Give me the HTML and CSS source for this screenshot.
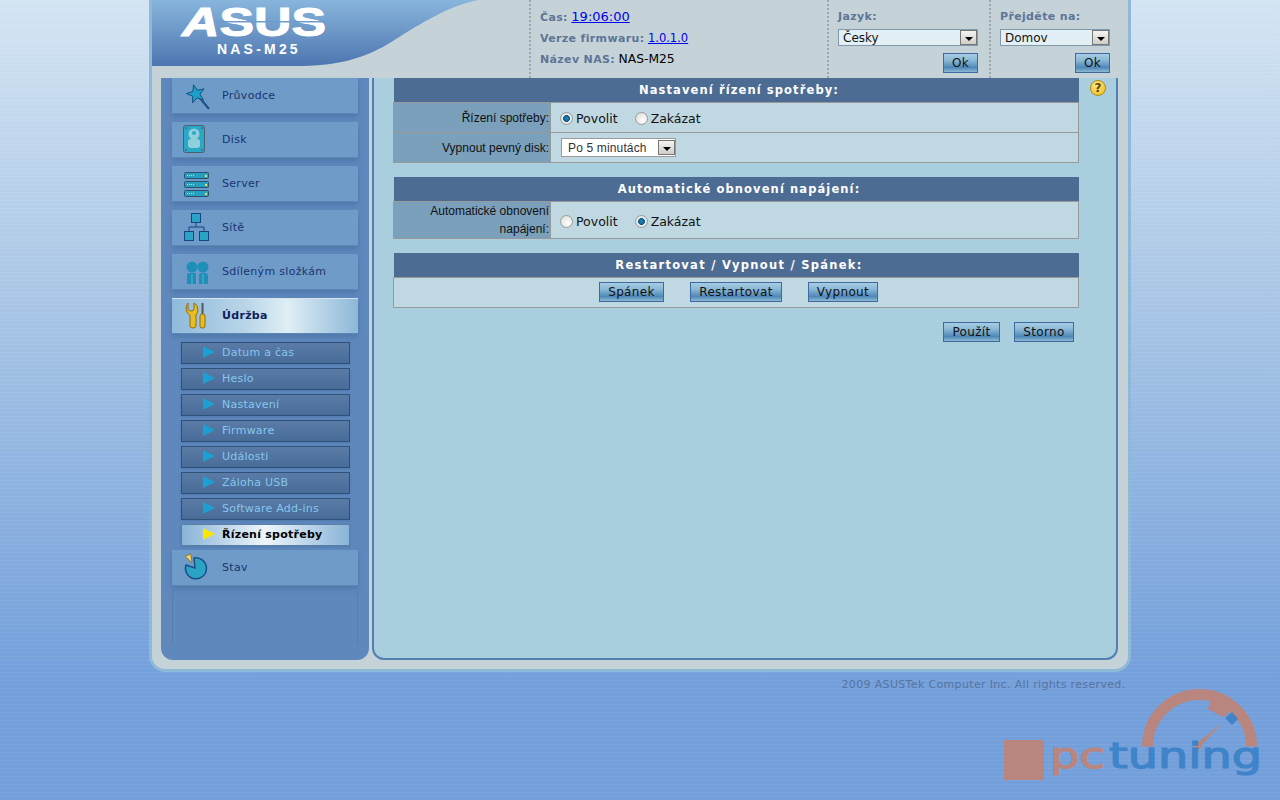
FILE: index.html
```html
<!DOCTYPE html>
<html lang="cs">
<head>
    <meta charset="UTF-8">
    <meta name="viewport" content="width=device-width, initial-scale=1.0">
    <title>NAS-M25</title>
    <link rel="stylesheet" href="styles.css">
</head>
<body>
    <div class="frame">
        <div class="header">
            <div class="logo">
                <svg width="377" height="78" viewBox="0 0 377 78">
                    <defs>
                        <linearGradient id="logoBg" x1="0" y1="0" x2="0" y2="1">
                            <stop offset="0" stop-color="#88b5dc"/>
                            <stop offset="1" stop-color="#4d76b0"/>
                        </linearGradient>
                    </defs>
                    <path d="M0 0H326C292 7 262 28 236 44C206 62 176 66 146 66H0Z" fill="url(#logoBg)"/>
                    <text class="logo-asus" x="30" y="36" textLength="144" lengthAdjust="spacingAndGlyphs"><tspan class="logo-a">A</tspan>SUS</text>
                    <rect x="62" y="21" width="112" height="1.5" fill="#6f9ccc"/>
                    <text class="logo-model" x="65" y="54">NAS-M25</text>
                </svg>
            </div>
            <div class="info">
                <p><b>Čas:</b> <a class="time" href="#">19:06:00</a></p>
                <p><b>Verze firmwaru:</b> <a class="version" href="#">1.0.1.0</a></p>
                <p><b>Název NAS:</b> <span>NAS-M25</span></p>
            </div>
            <div class="picker lang">
                <b>Jazyk:</b>
                <div class="select top-select"><span>Česky</span><i class="drop"></i></div>
                <button class="btn ok">Ok</button>
            </div>
            <div class="picker goto">
                <b>Přejděte na:</b>
                <div class="select top-select"><span>Domov</span><i class="drop"></i></div>
                <button class="btn ok">Ok</button>
            </div>
        </div>

        <div class="body">
            <div class="sidebar">
                <div class="menu-item">
                    <svg width="32" height="32" viewBox="0 0 32 32">
                        <line x1="19" y1="17" x2="29" y2="29" stroke="#1c4f86" stroke-width="2"/>
                        <polygon points="13.5,4.8 17.4,10.3 24,8.8 20,14.2 23.4,20 17,17.9 12.6,22.9 12.6,16.2 6.5,13.5 12.9,11.5" fill="#1d9fc9" stroke="#14507f"/>
                    </svg>
                    <span>Průvodce</span>
                </div>
                <div class="menu-item">
                    <svg width="32" height="32" viewBox="0 0 32 32">
                        <rect x="3.5" y="1.5" width="21" height="27" rx="2" fill="#2aa9c6" stroke="#4a5f70"/>
                        <circle cx="14" cy="10" r="5.5" fill="#8fd0dc"/>
                        <circle cx="14" cy="9" r="2" fill="#2aa9c6"/>
                        <rect x="8" y="15" width="12" height="9" rx="3" fill="#8fd0dc"/>
                        <circle cx="6" cy="4" r="1" fill="#54616b"/>
                        <circle cx="22" cy="4" r="1" fill="#54616b"/>
                        <circle cx="6" cy="26" r="1" fill="#54616b"/>
                        <circle cx="22" cy="26" r="1" fill="#54616b"/>
                    </svg>
                    <span>Disk</span>
                </div>
                <div class="menu-item">
                    <svg width="32" height="32" viewBox="0 0 32 32">
                        <g fill="#27a0c0" stroke="#2d4f6b">
                            <rect x="4.5" y="4.5" width="24" height="6" rx="1"/>
                            <rect x="4.5" y="13.5" width="24" height="6" rx="1"/>
                            <rect x="4.5" y="22.5" width="24" height="6" rx="1"/>
                        </g>
                        <g stroke="#b6e2ea" stroke-dasharray="1 1">
                            <line x1="7" y1="7.5" x2="15" y2="7.5"/>
                            <line x1="7" y1="16.5" x2="15" y2="16.5"/>
                            <line x1="7" y1="25.5" x2="15" y2="25.5"/>
                        </g>
                        <g fill="#e8d860">
                            <rect x="25" y="7" width="2" height="2"/>
                            <rect x="25" y="16" width="2" height="2"/>
                            <rect x="25" y="25" width="2" height="2"/>
                        </g>
                    </svg>
                    <span>Server</span>
                </div>
                <div class="menu-item">
                    <svg width="32" height="32" viewBox="0 0 32 32">
                        <path d="M16 11V15M9 19V15H24V19" fill="none" stroke="#14457f"/>
                        <g fill="#2ba3c6" stroke="#14457f">
                            <rect x="11.5" y="1.5" width="9" height="9"/>
                            <rect x="4.5" y="19.5" width="9" height="9"/>
                            <rect x="19.5" y="19.5" width="9" height="9"/>
                        </g>
                    </svg>
                    <span>Sítě</span>
                </div>
                <div class="menu-item">
                    <svg width="32" height="32" viewBox="0 0 32 32">
                        <g fill="#1f8fb8">
                            <circle cx="12" cy="11" r="5.5"/>
                            <circle cx="23" cy="11" r="5.5"/>
                            <path d="M7 28V20Q7 17 10 17H15Q16 17 16 20V28Z"/>
                            <path d="M19 28V20Q19 17 21 17H25Q28 17 28 20V28Z"/>
                        </g>
                        <path d="M12 18V28M23 18V28" stroke="#4fb8d4"/>
                    </svg>
                    <span>Sdíleným složkám</span>
                </div>
                <div class="menu-item active">
                    <svg width="32" height="32" viewBox="0 0 32 32">
                        <path d="M8 3V9Q8 11 11 11Q14 11 14 9V3Q18 5 18 10Q18 13 16 15V26Q16 28 13 28Q10 28 10 26V15Q6 13 6 9Q6 5 8 3Z" fill="#e8bc22" stroke="#8f6f10"/>
                        <rect x="21.5" y="3" width="2" height="11" fill="#55585c"/>
                        <rect x="20" y="14" width="5" height="14" rx="2" fill="#e8bc22" stroke="#8f6f10"/>
                    </svg>
                    <span>Údržba</span>
                </div>
                <div class="submenu">
                    <div class="sub-item"><svg class="arrow" width="12" height="12" viewBox="0 0 12 12"><polygon points="0,0 12,6 0,12"/></svg><span>Datum a čas</span></div>
                    <div class="sub-item"><svg class="arrow" width="12" height="12" viewBox="0 0 12 12"><polygon points="0,0 12,6 0,12"/></svg><span>Heslo</span></div>
                    <div class="sub-item"><svg class="arrow" width="12" height="12" viewBox="0 0 12 12"><polygon points="0,0 12,6 0,12"/></svg><span>Nastavení</span></div>
                    <div class="sub-item"><svg class="arrow" width="12" height="12" viewBox="0 0 12 12"><polygon points="0,0 12,6 0,12"/></svg><span>Firmware</span></div>
                    <div class="sub-item"><svg class="arrow" width="12" height="12" viewBox="0 0 12 12"><polygon points="0,0 12,6 0,12"/></svg><span>Události</span></div>
                    <div class="sub-item"><svg class="arrow" width="12" height="12" viewBox="0 0 12 12"><polygon points="0,0 12,6 0,12"/></svg><span>Záloha USB</span></div>
                    <div class="sub-item"><svg class="arrow" width="12" height="12" viewBox="0 0 12 12"><polygon points="0,0 12,6 0,12"/></svg><span>Software Add-ins</span></div>
                    <div class="sub-item current"><svg class="arrow" width="12" height="12" viewBox="0 0 12 12"><polygon points="0,0 12,6 0,12"/></svg><span>Řízení spotřeby</span></div>
                </div>
                <div class="menu-item">
                    <svg width="32" height="32" viewBox="0 0 32 32">
                        <path d="M14 6A10.5 10.5 0 1 1 6 13L15 16Z" fill="#2aa3c4" stroke="#1b4f8a" stroke-width="1.5"/>
                        <polygon points="5,4 11,2 12,11" fill="#e8cf70" stroke="#8c7a3a"/>
                    </svg>
                    <span>Stav</span>
                </div>
                <div class="side-fill"></div>
            </div>

            <div class="content">
                <div class="forms">
                    <table class="section">
                        <colgroup><col class="col-name"><col></colgroup>
                        <tr><th colspan="2">Nastavení řízení spotřeby:</th></tr>
                        <tr class="row-a">
                            <td class="name">Řízení spotřeby:</td>
                            <td class="value">
                                <label class="radio"><input type="radio" name="power" checked>Povolit</label>
                                <label class="radio"><input type="radio" name="power">Zakázat</label>
                            </td>
                        </tr>
                        <tr class="row-a">
                            <td class="name">Vypnout pevný disk:</td>
                            <td class="value">
                                <div class="select disk-select"><span>Po 5 minutách</span><i class="drop"></i></div>
                            </td>
                        </tr>
                    </table>
                    <table class="section">
                        <colgroup><col class="col-name"><col></colgroup>
                        <tr><th colspan="2">Automatické obnovení napájení:</th></tr>
                        <tr class="row-b">
                            <td class="name">Automatické obnovení napájení:</td>
                            <td class="value">
                                <label class="radio"><input type="radio" name="restore">Povolit</label>
                                <label class="radio"><input type="radio" name="restore" checked>Zakázat</label>
                            </td>
                        </tr>
                    </table>
                    <table class="section wide">
                        <tr><th>Restartovat / Vypnout / Spánek:</th></tr>
                        <tr class="row-a">
                            <td class="value actions">
                                <button class="btn b-sleep">Spánek</button>
                                <button class="btn b-restart">Restartovat</button>
                                <button class="btn b-off">Vypnout</button>
                            </td>
                        </tr>
                    </table>
                    <div class="apply">
                        <button class="btn b-apply">Použít</button>
                        <button class="btn b-cancel">Storno</button>
                    </div>
                </div>
                <div class="help">?</div>
            </div>
        </div>
    </div>
    <div class="copyright">2009 ASUSTek Computer Inc. All rights reserved.</div>

    <svg class="watermark" width="260" height="115" viewBox="0 0 260 115">
        <path d="M147.5 61.5A52 52 0 0 1 251.5 61.5" fill="none" stroke="#b8867f" stroke-width="11"/>
        <polygon points="210,17 208,24 223,32 235,24 222,10" fill="#b8867f"/>
        <polygon points="232,27 238,34 232,40 225,33" fill="#3f83c8"/>
        <polygon points="223,37 200,62 196,59" fill="#b8867f"/>
        <circle cx="198" cy="61" r="3.5" fill="#b8867f"/>
        <rect x="4" y="55" width="40" height="40" fill="#b8867f"/>
        <text class="mark-pc" x="50" y="83" textLength="55" lengthAdjust="spacingAndGlyphs">pc</text>
        <text class="mark-tuning" x="109" y="83" textLength="153" lengthAdjust="spacingAndGlyphs">tuning</text>
    </svg>
</body>
</html>
```

FILE: styles.css
```css
html, body {
    height: 100%;
}
body {
    margin: 0;
    overflow: hidden;
    font-family: "DejaVu Sans", sans-serif;
    background-color: #739fdb;
    background-image:
        repeating-linear-gradient(to bottom, rgba(255, 255, 255, 0.06) 0, rgba(255, 255, 255, 0.06) 1px, transparent 1px, transparent 4px),
        linear-gradient(to bottom, #d4e4f3 0, #a9c6e6 300px, #739fdb 680px);
}
.frame {
    width: 976px;
    height: 669px;
    margin: 0 auto;
    background-color: #c5d3d8;
    border: 3px solid #8fb9d8;
    border-top: 0;
    border-radius: 0 0 16px 16px;
}

/* header */
.header {
    display: flex;
    height: 78px;
    color: #5d7596;
    font-size: 11px;
}
.header b {
    letter-spacing: 0.35px;
}
.logo {
    width: 377px;
    flex: none;
}
.logo svg {
    display: block;
}
.logo-asus {
    font-family: "Liberation Sans", sans-serif;
    font-size: 40px;
    font-weight: bold;
    fill: #fff;
    stroke: #fff;
    stroke-width: 1px;
}
.logo-a {
    font-style: italic;
}
.logo-model {
    font-family: "Liberation Sans", sans-serif;
    font-size: 14px;
    font-weight: bold;
    letter-spacing: 3.2px;
    fill: #fff;
}
.info, .picker {
    box-sizing: border-box;
    border-left: 2px dotted #9aa8ae;
}
.info {
    width: 298px;
    padding: 7px 0 0 9px;
}
.info p {
    margin: 0;
    height: 21.5px;
    line-height: 19px;
}
.info span {
    color: #000;
    font-size: 12.3px;
}
.time {
    font-size: 13px;
    color: #00e;
}
.version {
    font-size: 11.5px;
    color: #00e;
}
.picker {
    display: flex;
    flex-direction: column;
    padding: 9px 0 0 9px;
}
.lang {
    width: 162px;
}
.goto {
    width: 139px;
}
.picker b {
    line-height: 16px;
}
.top-select {
    margin-top: 4px;
    height: 17px;
    background-color: #e2f0f6;
    border-color: #8199ad;
    font-size: 12px;
}
.lang .top-select {
    width: 140px;
}
.goto .top-select {
    width: 110px;
}
.ok {
    width: 35px;
    margin: 7px 0 0 105px;
    height: 20px;
}
.goto .ok {
    margin-left: 75px;
}

/* select look */
.select {
    box-sizing: border-box;
    display: flex;
    align-items: center;
    justify-content: space-between;
    border-width: 1px;
    border-style: solid;
    color: #111;
}
.select span {
    padding-left: 4px;
}
.drop {
    box-sizing: border-box;
    width: 17px;
    height: 15px;
    flex: none;
    display: flex;
    align-items: center;
    justify-content: center;
    background: linear-gradient(to bottom, #f4f4f0, #cfcfc8);
    border: 1px solid #777;
}
.drop::after {
    content: "";
    margin-top: 3px;
    border-left: 4px solid transparent;
    border-right: 4px solid transparent;
    border-top: 4px solid #000;
}

/* buttons */
.btn {
    box-sizing: border-box;
    height: 20px;
    padding: 0;
    font-family: "DejaVu Sans", sans-serif;
    font-size: 12px;
    letter-spacing: 0.35px;
    color: #111;
    border: 1px solid #3f6a9f;
    background: linear-gradient(to bottom, #a6cde3 0, #8ab8d6 35%, #4f88b8 75%, #8db9d3 100%);
    cursor: pointer;
}

/* body */
.body {
    display: flex;
    height: 582px;
    padding-left: 9px;
}
.sidebar {
    box-sizing: border-box;
    width: 208px;
    margin-right: 3px;
    padding: 0 11px;
    display: flex;
    flex-direction: column;
    background-color: #5f88bd;
    border-radius: 0 0 12px 12px;
}
.menu-item {
    display: flex;
    align-items: center;
    flex: none;
    height: 35px;
    margin-bottom: 9px;
    padding-left: 8px;
    font-size: 11px;
    letter-spacing: 0.3px;
    color: #1a3570;
    background-color: #6f9bc9;
    box-shadow: 0 1px 0 #5c86b5, 0 4px 5px #4f79ab;
}
.menu-item span {
    margin-left: 10px;
}
.menu-item.active {
    font-weight: bold;
    color: #10205c;
    background: linear-gradient(to right, #8fbadb 0, #b9d6e8 40%, #e0eef5 62%, #8db8d8 100%);
    box-shadow: 0 1px 0 #d6e6f0 inset, 0 1px 0 #5c86b5, 0 4px 5px #4f79ab;
}
.submenu {
    display: flex;
    flex-direction: column;
    gap: 4px;
    margin-bottom: 4px;
    padding: 0 8px 0 9px;
}
.sub-item {
    box-sizing: border-box;
    display: flex;
    align-items: center;
    height: 22px;
    padding: 0 0 2px 21px;
    font-size: 11px;
    letter-spacing: 0.25px;
    color: #86c6ee;
    background: linear-gradient(to bottom, #5a7ba6, #486c98);
    border: 1px solid #2f5078;
    box-shadow: 0 1px 2px #4f79ab;
}
.sub-item span {
    margin-left: 7px;
}
.arrow {
    fill: #1c9fd2;
}
.sub-item.current {
    font-weight: bold;
    color: #000;
    background: linear-gradient(to right, #8ab4d8 0, #eef6fa 50%, #8ab4d8 100%);
    border-color: #5a7fa5;
}
.current .arrow {
    fill: #f8e800;
}
.side-fill {
    flex: none;
    height: 55px;
    margin-top: -4px;
    border-left: 1px solid #5780b2;
    border-right: 1px solid #5780b2;
}

/* content */
.content {
    box-sizing: border-box;
    width: 746px;
    padding-left: 19px;
    display: flex;
    background-color: #a9cfdf;
    border: 2px solid #5180b2;
    border-top: 0;
    border-radius: 0 0 12px 12px;
}
.forms {
    width: 686px;
}
.section {
    width: 686px;
    margin-bottom: 14px;
    border-collapse: collapse;
    table-layout: fixed;
}
.col-name {
    width: 157px;
}
.section th {
    height: 24px;
    padding: 0 0 0 6px;
    font-size: 11.5px;
    letter-spacing: 1.1px;
    color: #fff;
    background-color: #4d6c94;
    border: 0;
}
.section.wide th {
    letter-spacing: 1.27px;
}
.section td {
    padding: 0;
    border: 1px solid #999;
}
.row-a td {
    height: 29px;
}
.row-b td {
    height: 35px;
}
.section .name {
    padding-right: 1px;
    text-align: right;
    font-family: "Liberation Sans", sans-serif;
    font-size: 12px;
    line-height: 18px;
    color: #111;
    background-color: #7aa0bc;
}
.section .value {
    padding-left: 10px;
    background-color: #c0d8e2;
    font-size: 12.5px;
    color: #111;
}
.radio {
    display: inline-flex;
    align-items: center;
    margin-right: 14px;
    padding-top: 4px;
}
.radio input {
    appearance: none;
    box-sizing: border-box;
    width: 13px;
    height: 13px;
    margin: 0 3px 0 -1px;
    border: 1px solid #9a9a9a;
    border-radius: 50%;
    background: radial-gradient(circle at 65% 65%, #fff, #d8d8d0);
}
.radio input:checked {
    background: radial-gradient(circle, #2a86bc 0, #0d5a8a 40%, #e8eef0 48%, #d8d8d0 100%);
}
.disk-select {
    width: 115px;
    height: 19px;
    border-color: #9a9a9a;
    background-color: #fff;
    font-family: "Liberation Sans", sans-serif;
    font-size: 12px;
    letter-spacing: 0.15px;
    color: #333;
}
.disk-select span {
    padding-left: 6px;
}
.section .actions {
    padding-left: 0;
    text-align: left;
}
.actions .btn {
    vertical-align: middle;
    margin-bottom: 2px;
}
.b-sleep {
    width: 65px;
    margin-left: 205px;
}
.b-restart {
    width: 92px;
    margin-left: 22px;
}
.b-off {
    width: 70px;
    margin-left: 22px;
}
.apply {
    display: flex;
    justify-content: flex-end;
    gap: 14px;
    padding-right: 5px;
}
.b-apply {
    width: 57px;
}
.b-cancel {
    width: 60px;
}
.help {
    box-sizing: border-box;
    width: 16px;
    height: 16px;
    margin: 2px 0 0 11px;
    font-size: 12px;
    font-weight: bold;
    line-height: 14px;
    text-align: center;
    color: #5a4400;
    background: radial-gradient(circle at 40% 30%, #ffe98a, #eeb810);
    border: 1px solid #b08a10;
    border-radius: 50%;
}

/* footer */
.copyright {
    width: 971px;
    margin: 6px auto 0;
    text-align: right;
    font-size: 11px;
    letter-spacing: 0.34px;
    color: #56749f;
}
.watermark {
    position: absolute;
    right: 20px;
    bottom: 0;
}
.mark-pc, .mark-tuning {
    font-family: "DejaVu Sans", sans-serif;
    font-size: 35px;
    stroke-width: 1.2px;
}
.mark-pc {
    fill: #b8867f;
    stroke: #b8867f;
}
.mark-tuning {
    fill: #3f83c8;
    stroke: #3f83c8;
}
```
